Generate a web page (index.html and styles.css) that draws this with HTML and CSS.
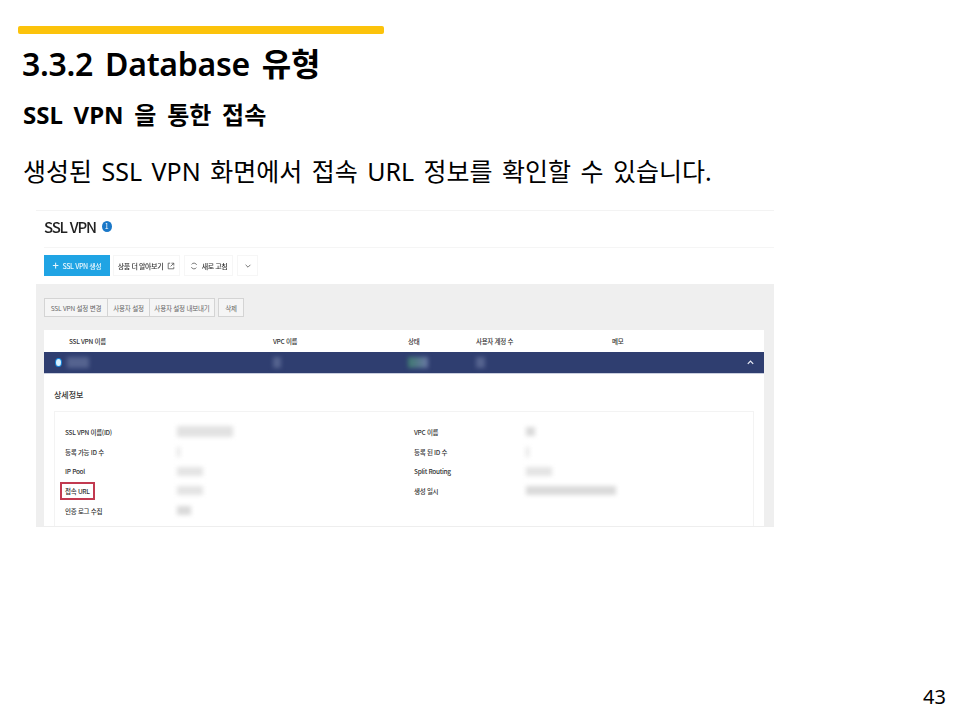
FILE: index.html
```html
<!DOCTYPE html>
<html lang="ko">
<head>
  <meta charset="UTF-8">
  <meta name="viewport" content="width=device-width, initial-scale=1.0">
  <title>3.3.2 Database 유형</title>
  <link rel="stylesheet" href="styles.css">
</head>
<body>
  <div class="slide">
    <div class="accent-bar"></div>
    <h1 class="slide-title">3.3.2 Database 유형</h1>
    <h2 class="slide-subtitle">SSL VPN 을 통한 접속</h2>
    <p class="slide-text">생성된 SSL VPN 화면에서 접속 URL 정보를 확인할 수 있습니다.</p>

    <div class="capture">
      <div class="capture-header">
        <span class="capture-title">SSL VPN</span>
        <span class="count-badge">1</span>
      </div>

      <div class="toolbar">
        <button class="tool-button primary"><span class="plus">+</span> SSL VPN 생성</button>
        <button class="tool-button info">
          상품 더 알아보기
          <svg class="tool-icon" viewBox="0 0 10 10"><path d="M4 1.5H1.5v7h7V6M5.5 1.5h3v3M8.5 1.5 4.5 5.5"/></svg>
        </button>
        <button class="tool-button refresh">
          <svg class="tool-icon" viewBox="0 0 10 10"><path d="M8.3 3.6A3.6 3.6 0 0 0 2 3M1.7 6.4A3.6 3.6 0 0 0 8 7"/></svg>
          새로 고침
        </button>
        <button class="tool-button square">
          <svg class="tool-icon" viewBox="0 0 10 10"><path d="M2 3.5 5 6.5 8 3.5"/></svg>
        </button>
      </div>

      <div class="panel">
        <div class="actions">
          <div class="action-group">
            <button class="action-button wide">SSL VPN 설정 변경</button>
            <button class="action-button">사용자 설정</button>
            <button class="action-button mid">사용자 설정 내보내기</button>
          </div>
          <button class="action-button delete">삭제</button>
        </div>

        <div class="table">
          <div class="table-row table-head">
            <span>SSL VPN 이름</span>
            <span>VPC 이름</span>
            <span>상태</span>
            <span>사용자 계정 수</span>
            <span>메모</span>
          </div>
          <div class="table-row table-selected">
            <span class="radio"></span>
            <span class="blur-cell w-name"></span>
            <span class="blur-cell w-vpc"></span>
            <span class="blur-cell w-status"></span>
            <span class="blur-cell w-count"></span>
            <svg class="row-chevron" viewBox="0 0 10 10"><path d="M2 6.5 5 3.5 8 6.5"/></svg>
          </div>

          <div class="detail">
            <div class="detail-title">상세정보</div>
            <div class="detail-card">
              <div class="detail-grid">
                <span class="label">SSL VPN 이름(ID)</span><span class="value"><i class="smudge s-long"></i></span>
                <span class="label">VPC 이름</span><span class="value"><i class="smudge s-short"></i></span>

                <span class="label">등록 가능 ID 수</span><span class="value"><i class="smudge s-tiny"></i></span>
                <span class="label">등록 된 ID 수</span><span class="value"><i class="smudge s-tiny"></i></span>

                <span class="label">IP Pool</span><span class="value"><i class="smudge s-mid"></i></span>
                <span class="label">Split Routing</span><span class="value"><i class="smudge s-mid"></i></span>

                <span class="label"><span class="marked">접속 URL</span></span><span class="value"><i class="smudge s-mid"></i></span>
                <span class="label">생성 일시</span><span class="value"><i class="smudge s-date"></i></span>

                <span class="label">인증 로그 수집</span><span class="value"><i class="smudge s-log"></i></span>
              </div>
            </div>
          </div>
        </div>
      </div>
    </div>

    <div class="page-number">43</div>
  </div>
</body>
</html>
```

FILE: styles.css
```css
* {
  box-sizing: border-box;
}

body {
  margin: 0;
  background-color: #fff;
  color: #000;
  font-family: "Noto Sans", "Noto Sans CJK KR", sans-serif;
}

.slide {
  position: relative;
  width: 960px;
  height: 720px;
  padding: 26px 0 0 18px;
  overflow: hidden;
}

.accent-bar {
  width: 366px;
  height: 8px;
  background-color: #fcc30b;
  border-radius: 2px;
}

.slide-title {
  margin: 8px 0 0 4px;
  font-size: 32px;
  line-height: 44px;
  font-weight: 600;
  letter-spacing: -0.3px;
  word-spacing: 4px;
}

.slide-subtitle {
  margin: 14px 0 0 5px;
  font-size: 24px;
  line-height: 30px;
  font-weight: 700;
  word-spacing: 4.5px;
}

.slide-text {
  margin: 24px 0 0 5px;
  font-size: 25px;
  line-height: 34px;
  font-weight: 400;
  word-spacing: 3px;
}

.page-number {
  position: absolute;
  right: 14px;
  bottom: 9px;
  font-size: 20px;
  line-height: 28px;
}

/* captured console screenshot, soft like a scaled image */
.capture {
  display: flex;
  flex-direction: column;
  width: 738px;
  height: 317px;
  margin: 22px 0 0 18px;
  border-top: 1px solid #f3f3f3;
  border-bottom: 1px solid #eee;
  color: #222;
  font-family: "Noto Sans CJK KR", "Noto Sans", sans-serif;
  overflow: hidden;
  filter: blur(0.35px);
}

.capture-header {
  display: flex;
  align-items: center;
  gap: 6px;
  flex: none;
  height: 37px;
  margin-left: 8px;
  padding-bottom: 6px;
  border-bottom: 1px solid #f5f5f5;
}

.capture-title {
  font-size: 15px;
  font-weight: 500;
  letter-spacing: -1.2px;
  color: #222;
}

.count-badge {
  display: flex;
  align-items: center;
  justify-content: center;
  width: 10px;
  height: 11px;
  border-radius: 50%;
  background-color: #1a78c8;
  color: #fff;
  font-size: 7px;
}

.toolbar {
  display: flex;
  flex: none;
  align-items: flex-start;
  gap: 4px;
  height: 36px;
  padding: 7px 0 0 8px;
}

.tool-button {
  display: flex;
  align-items: center;
  justify-content: center;
  gap: 4px;
  height: 21px;
  padding: 0;
  border: 1px solid #f6f6f6;
  background-color: #fff;
  color: #333;
  font-family: inherit;
  font-size: 7px;
  font-weight: 500;
  letter-spacing: -0.4px;
  white-space: nowrap;
}

.tool-button.primary {
  width: 66px;
  margin-right: -1px;
  border: none;
  background-color: #20a4e4;
  color: #e8f6fd;
}

.tool-button .plus {
  font-size: 11px;
  line-height: 1;
}

.tool-button.info {
  width: 67px;
}

.tool-button.refresh {
  width: 49px;
}

.tool-button.square {
  width: 21px;
}

.tool-icon {
  flex: none;
  width: 8px;
  height: 8px;
  fill: none;
  stroke: #555;
  stroke-width: 1;
}

.panel {
  display: flex;
  flex: 1;
  flex-direction: column;
  min-height: 0;
  padding: 14px 10px 0 8px;
  background-color: #efefef;
}

.actions {
  display: flex;
  flex: none;
  gap: 3px;
  height: 19px;
}

.action-group {
  display: flex;
}

.action-button {
  width: 42px;
  height: 19px;
  padding: 0;
  border: 1px solid #d4d4d4;
  background-color: #f5f5f5;
  color: #666;
  font-family: inherit;
  font-size: 6.5px;
  letter-spacing: -0.2px;
  white-space: nowrap;
}

.action-button + .action-button {
  border-left: none;
}

.action-button.wide {
  width: 64px;
}

.action-button.mid {
  width: 65px;
}

.action-button.delete {
  width: 26px;
}

.table {
  display: flex;
  flex: 1;
  flex-direction: column;
  min-height: 0;
  margin-top: 13px;
  background-color: #fff;
}

.table-row {
  display: grid;
  grid-template-columns: 25px 204px 135px 68px 136px 1fr;
  align-items: center;
  flex: none;
  height: 22px;
}

.table-head {
  font-size: 6.5px;
  font-weight: 500;
  letter-spacing: -0.3px;
  color: #333;
}

.table-head span:first-child {
  grid-column: 2;
}

.table-selected {
  position: relative;
  background-color: #2f3e70;
  border-bottom: 1px solid #c9cede;
}

.radio {
  justify-self: center;
  margin-left: 3px;
  width: 5px;
  height: 7px;
  border-radius: 50%;
  background-color: #d8f0ff;
  box-shadow: 0 0 0 1px #1a86d8;
}

.blur-cell {
  height: 11px;
  background-color: #55638f;
  filter: blur(2px);
}

.w-name {
  width: 22px;
  margin-left: -2px;
}

.w-vpc {
  width: 8px;
}

.w-status {
  width: 20px;
  background: linear-gradient(90deg, #3f7a70, #6a78a5);
}

.w-count {
  width: 9px;
}

.row-chevron {
  position: absolute;
  right: 9px;
  top: 6px;
  width: 9px;
  height: 9px;
  fill: none;
  stroke: #e8ebf5;
  stroke-width: 1.4;
}

.detail {
  flex: 1;
  min-height: 0;
  padding: 0 10px;
}

.detail-title {
  margin-top: 13px;
  font-size: 8px;
  line-height: 16px;
  font-weight: 500;
  color: #333;
}

.detail-card {
  margin-top: 8px;
  height: 130px;
  padding: 10px 0 0 10px;
  border: 1px solid #f3f3f3;
}

.detail-grid {
  display: grid;
  grid-template-columns: 112px 237px 112px 1fr;
  grid-auto-rows: 19.7px;
  align-items: center;
}

.label {
  font-size: 6.5px;
  font-weight: 500;
  letter-spacing: -0.3px;
  color: #333;
  white-space: nowrap;
}

.marked {
  display: inline-block;
  padding: 0 1px;
  margin: 0 -1px;
  outline: 2px solid #c23a50;
  outline-offset: 2px;
  line-height: 10px;
}

.value {
  display: flex;
  align-items: center;
}

.smudge {
  display: block;
  height: 9px;
  background-color: #dadada;
  filter: blur(2px);
}

.s-long {
  width: 56px;
  height: 11px;
  background-color: #e2e2e2;
}

.s-short {
  width: 9px;
}

.s-tiny {
  width: 3px;
  height: 10px;
  background-color: #e4e4e4;
}

.s-mid {
  width: 26px;
  background-color: #e4e4e4;
}

.s-date {
  width: 90px;
}

.s-log {
  width: 14px;
}
```
